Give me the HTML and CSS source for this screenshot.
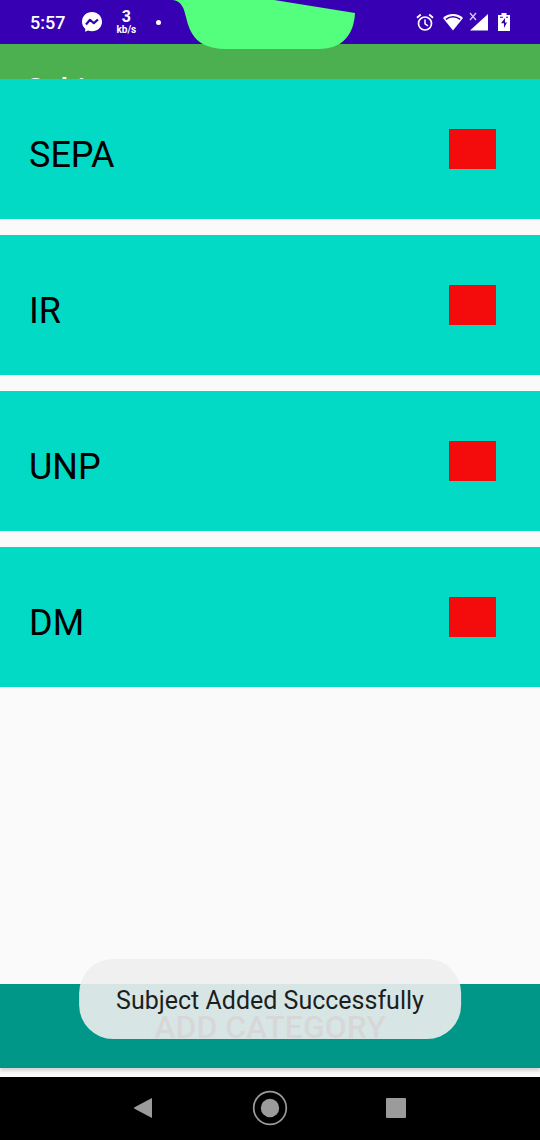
FILE: index.html
```html
<!DOCTYPE html>
<html lang="en">
<head>
<meta charset="utf-8">
<meta name="viewport" content="width=device-width, initial-scale=1">
<title>Subjects</title>
<link rel="stylesheet" href="styles.css">
</head>
<body>
<div class="screen">
  <div class="status">
    <div class="status-group">
      <span class="clock">5:57</span>
      <svg class="messenger" width="20" height="20" viewBox="0 0 20 20" aria-hidden="true"><path fill="#fff" d="M10 0C4.300 0 0 4.200 0 9.700c0 2.900 1.200 5.300 3.200 7v3l2.800-1.100c1.200.4 2.500.6 4 .6 5.700 0 10-4.100 10-9.500S15.700 0 10 0z"/><path d="M4 12.500 8 7.800l3.800 3.400L16 7.500" fill="none" stroke="#3700b3" stroke-width="2.200" stroke-linejoin="round"/></svg>
      <span class="speed"><span class="speed-value">3</span><span class="speed-unit">kb/s</span></span>
      <span class="dot"></span>
    </div>
    <div class="status-group status-right">
      <svg width="18" height="19" viewBox="0 0 18 19" aria-hidden="true" fill="none" stroke="#fff"><circle cx="9" cy="10.500" r="6.500" stroke-width="1.700"/><path d="M1 4.800 4.800 1.500M17 4.800l-3.800-3.300" stroke-width="1.800"/><path d="M9 6.500v4.300l3 2" stroke-width="1.500"/></svg>
      <svg width="20" height="18" viewBox="0 0 20 18" aria-hidden="true"><path fill="#fff" d="M10 1C6 1 2.500 2.500 0 5l10 12.500L20 5c-2.500-2.500-6-4-10-4z"/><path d="M2.800 6.300c4.500-3.200 9.900-3.200 14.400 0" fill="none" stroke="#3700b3" stroke-width="1.600"/></svg>
      <svg class="signal" width="20" height="20" viewBox="0 0 20 20" aria-hidden="true"><path fill="#fff" d="M19 2v16.500H1z"/><path d="M0 0h9v9.500H0z" fill="#3700b3"/><path d="m1 1 6 7m0-7-6 7" stroke="#d9ccf2" stroke-width="1.300"/></svg>
      <svg width="12" height="18" viewBox="0 0 12 18" aria-hidden="true"><path fill="#fff" d="M3.500 0h5v2H12v16H0V2h3.500z"/><path fill="#3700b3" d="M7 5 3 10.200h3V15l3-5.500H7zM2 3.800h3v1H2zM8 3.800h2v1H8z"/></svg>
    </div>
    <svg class="notch" width="182" height="50" viewBox="0 0 182 50" aria-hidden="true"><path d="M0 0c9 1 11 9 13 17 4 18 12 31 38 32h95c23 0 35-14 36-36L101 0z" fill="#53ff7c"/></svg>
  </div>
  <header class="appbar"><h1>Subjects</h1></header>
  <main class="content">
    <ul class="subjects">
      <li><span>SEPA</span><button class="remove" type="button" aria-label="Remove SEPA"></button></li>
      <li><span>IR</span><button class="remove" type="button" aria-label="Remove IR"></button></li>
      <li><span>UNP</span><button class="remove" type="button" aria-label="Remove UNP"></button></li>
      <li><span>DM</span><button class="remove" type="button" aria-label="Remove DM"></button></li>
    </ul>
  </main>
  <div class="actions">
    <button class="add" type="button">ADD CATEGORY</button>
    <div class="toast" role="status">Subject Added Successfully</div>
  </div>
  <nav class="system">
    <button type="button" aria-label="Back"><svg width="20" height="22" viewBox="0 0 20 22"><path d="M19 1v20L1.500 11.800q-1-.8 0-1.600z" fill="#9b9b9b"/></svg></button>
    <button type="button" aria-label="Home"><svg width="36" height="36" viewBox="0 0 36 36"><circle cx="18" cy="18" r="16.300" fill="none" stroke="#9b9b9b" stroke-width="1.700"/><circle cx="18" cy="18" r="9.200" fill="#9b9b9b"/></svg></button>
    <button type="button" aria-label="Recent apps"><svg width="20" height="20" viewBox="0 0 20 20"><rect width="20" height="20" rx="1" fill="#9b9b9b"/></svg></button>
  </nav>
</div>
</body>
</html>
```
FILE: styles.css
```css
* { box-sizing: border-box; }
body {
  margin: 0;
  font-family: Roboto, "Liberation Sans", sans-serif;
  background: #fafafa;
  color: #000;
}
button {
  border: 0;
  padding: 0;
  font: inherit;
  cursor: pointer;
}
.screen {
  min-height: 100vh;
  display: flex;
  flex-direction: column;
}
.status {
  position: relative;
  z-index: 1;
  height: 44px;
  padding: 0 30px;
  display: flex;
  justify-content: space-between;
  align-items: center;
  background: #3700b3;
  color: #fff;
}
.status-group {
  display: flex;
  align-items: center;
}
.status-right { gap: 9px; }
.signal { margin-left: -3px; }
.clock {
  font-size: 18px;
  font-weight: 500;
}
.messenger { margin-left: 17px; }
.speed {
  margin-left: 14px;
  display: flex;
  flex-direction: column;
  align-items: center;
  font-weight: 700;
}
.speed-value {
  font-size: 16px;
  line-height: 16px;
}
.speed-unit {
  font-size: 10px;
  line-height: 10px;
}
.dot {
  width: 5px;
  height: 5px;
  margin-left: 20px;
  border-radius: 50%;
  background: #fff;
}
.notch {
  position: absolute;
  top: 0;
  left: 173px;
}
.appbar {
  height: 35px;
  padding: 27px 26px 0;
  overflow: hidden;
  background: #4caf50;
  color: #fff;
}
.appbar h1 {
  margin: 0;
  font-size: 30px;
  line-height: 36px;
  font-weight: 500;
}
.content { flex: 1; }
.subjects {
  margin: 0;
  padding: 0;
  list-style: none;
  display: flex;
  flex-direction: column;
  gap: 16px;
}
.subjects li {
  height: 140px;
  padding: 50px 44px 0 29px;
  display: flex;
  justify-content: space-between;
  align-items: flex-start;
  background: #03dac5;
  font-size: 36px;
  line-height: 52px;
}
.remove {
  width: 47px;
  height: 40px;
  background: #f40b0b;
}
.actions {
  position: relative;
  padding-bottom: 9px;
}
.add {
  display: block;
  width: 100%;
  height: 84px;
  padding-top: 2px;
  background: #009688;
  color: #000;
  font-size: 32px;
  font-weight: 500;
  box-shadow: 0 3px 3px rgba(0, 0, 0, 0.15);
}
.toast {
  position: absolute;
  bottom: 38px;
  left: 50%;
  transform: translateX(-50%);
  padding: 22px 37px 18px;
  border-radius: 34px;
  background: rgba(238, 238, 238, 0.9);
  color: #1b1f1f;
  font-size: 25px;
  line-height: 40px;
  white-space: nowrap;
}
.system {
  position: relative;
  height: 63px;
  padding: 0 108px 2px 107px;
  display: flex;
  justify-content: space-between;
  align-items: center;
  background: #000;
}
.system button {
  width: 72px;
  height: 48px;
  display: grid;
  place-items: center;
  background: transparent;
}
```
